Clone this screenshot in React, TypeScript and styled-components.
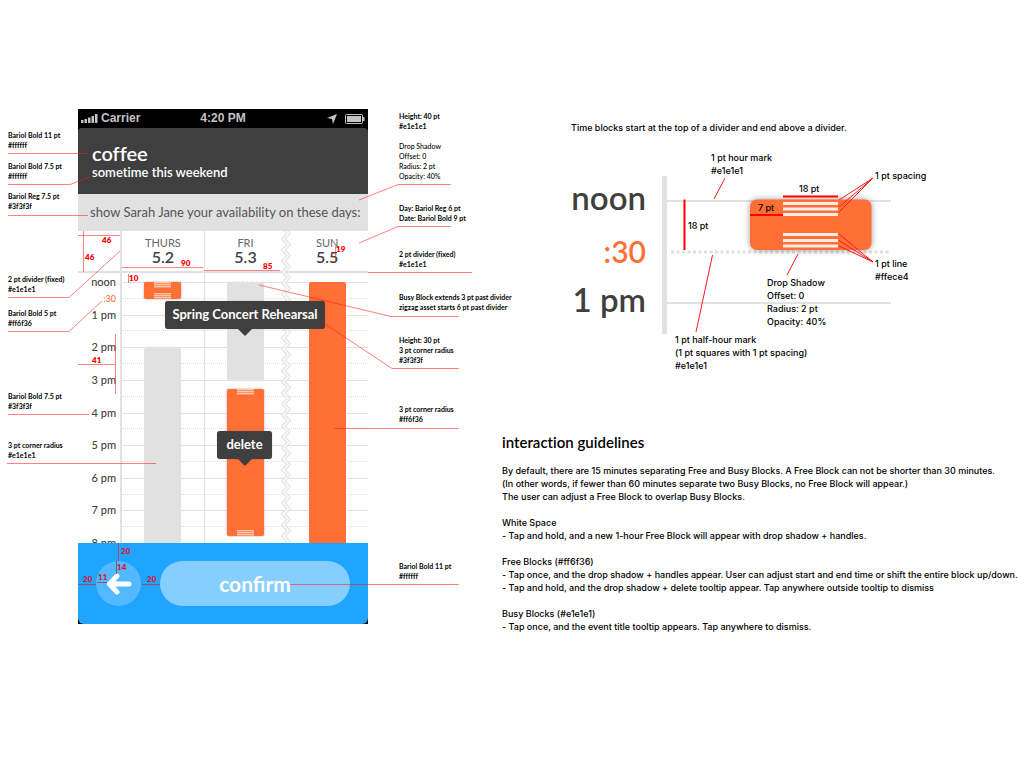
import React from "react";
import styled, { createGlobalStyle, css } from "styled-components";

const ink = "#3f3f3f";
const line = "#e1e1e1";
const free = "#ff6f36";
const red = "#ff1a1a";

const GlobalStyle = createGlobalStyle`
  *, *::before, *::after { box-sizing: border-box; }
  body {
    margin: 0;
    background: #fff;
    color: #111;
    font-family: Lato, "Open Sans", sans-serif;
    font-variant-ligatures: none;
  }
  h1, h2, h3, p, ul, figure { margin: 0; padding: 0; }
  ul { list-style: none; }
`;

const Sheet = styled.main`
  display: flex;
  align-items: flex-start;
  padding-top: 109px;
`;

/* ---------- annotated phone ---------- */

const Board = styled.section`
  position: relative;
  display: flex;
  flex: none;
`;

const Notes = styled.div<{ $side: "left" | "right" }>`
  flex: none;
  width: ${(p) => (p.$side === "left" ? 78 : 134)}px;
  padding-left: ${(p) => (p.$side === "left" ? 8 : 31)}px;
`;

const Note = styled.p<{ $gap: number; $regular?: boolean }>`
  margin-top: ${(p) => p.$gap}px;
  font-size: 7px;
  line-height: 10px;
  font-weight: ${(p) => (p.$regular ? 500 : 700)};
  color: #000;
  white-space: pre;
`;

const Phone = styled.article`
  flex: none;
  width: 290px;
  background: #000;
`;

const StatusBar = styled.div`
  display: grid;
  grid-template-columns: 1fr auto 1fr;
  align-items: center;
  height: 19px;
  padding: 0 3px;
  font: 700 12px/19px "Liberation Sans", Arial, sans-serif;
  color: #c4c4c4;
`;

const StatusGroup = styled.span<{ $end?: boolean }>`
  display: flex;
  align-items: center;
  gap: ${(p) => (p.$end ? 8 : 3)}px;
  justify-content: ${(p) => (p.$end ? "flex-end" : "flex-start")};
`;

const EventHeader = styled.header`
  height: 66px;
  padding: 14px 14px 0;
  border-radius: 4px 4px 0 0;
  background: ${ink};
  color: #fff;
`;

const EventTitle = styled.h1`
  font-size: 20px;
  line-height: 22px;
  font-weight: 600;
`;

const EventWhen = styled.p`
  font-size: 13px;
  line-height: 16px;
  font-weight: 600;
`;

const Prompt = styled.p`
  height: 37px;
  padding-left: 12px;
  background: ${line};
  color: #555;
  font-size: 13px;
  line-height: 36px;
  white-space: nowrap;
`;

const Schedule = styled.div`
  position: relative;
  display: grid;
  height: 312px;
  background: #fff;
`;

const Ruling = styled.div`
  grid-area: 1 / 1;
  display: flex;
  flex-direction: column;
  height: 312px;
`;

const RulingHead = styled.div`
  height: 51px;
  padding-top: 40px;
`;

const Divider = styled.div`
  height: 2px;
  background: ${line};
`;

const RulingHours = styled.div`
  flex: 1;
  display: grid;
  grid-template-rows: repeat(8, 1fr);
  margin-left: 44px;
`;

const RulingHour = styled.div`
  border-top: 1px solid ${line};
  &::after {
    content: "";
    display: block;
    height: 50%;
    border-bottom: 1px dotted #dcdcdc;
  }
`;

const Columns = styled.div`
  grid-area: 1 / 1;
  display: flex;
  height: 312px;
  overflow: hidden;
`;

const Hours = styled.div`
  flex: none;
  width: 44px;
  padding: 45px 4px 0 0;
  border-right: 2px solid ${line};
`;

const HourList = styled.ul`
  display: grid;
  grid-template-rows: repeat(8, 1fr) 12px;
  height: 273px;
  text-align: right;
  color: ${ink};
  font-size: 11px;
  line-height: 12px;
  font-weight: 500;
`;

const HalfHour = styled.span`
  display: block;
  margin-top: 5px;
  color: ${free};
  font-size: 9px;
`;

const Day = styled.section<{ $ruled?: boolean }>`
  flex: 1;
  display: flex;
  flex-direction: column;
  align-items: center;
  border-right: ${(p) => (p.$ruled ? `1px solid ${line}` : "0")};
`;

const DayHead = styled.h2`
  height: 50px;
  padding-top: 5px;
  text-align: center;
  color: ${ink};
  font-size: 16px;
  line-height: 16px;
  font-weight: 600;
`;

const DayName = styled.span`
  display: block;
  color: #666;
  font-size: 11px;
  line-height: 13px;
  font-weight: 400;
`;

const Block = styled.div<{ $kind: "free" | "busy"; $height: number; $gap?: number; $lifted?: boolean; $torn?: boolean; $open?: boolean }>`
  flex: none;
  display: flex;
  flex-direction: column;
  justify-content: space-between;
  align-items: center;
  width: 37px;
  height: ${(p) => p.$height}px;
  margin-top: ${(p) => p.$gap ?? 0}px;
  border-radius: ${(p) => (p.$open ? "2px 2px 0 0" : p.$torn ? "0 0 2px 2px" : "2px")};
  background: ${(p) => (p.$kind === "free" ? free : line)};
  ${(p) => p.$lifted && css`box-shadow: 0 0 2px rgba(0, 0, 0, 0.4);`}
  ${(p) =>
    p.$torn &&
    css`
      clip-path: polygon(0 2px, 6% 0, 12% 2px, 18% 0, 25% 2px, 31% 0, 37% 2px, 43% 0, 50% 2px, 56% 0, 62% 2px, 68% 0, 75% 2px, 81% 0, 87% 2px, 93% 0, 100% 2px, 100% 100%, 0 100%);
    `}
`;

const Grip = styled.span`
  width: 17px;
  height: 6px;
  background: repeating-linear-gradient(#ffc6ac 0 1px, #ff9468 1px 2px);
`;

const TearMark = styled.svg`
  flex: none;
  width: 10px;
  height: 312px;
  margin: 0 -5px;
`;

const Tooltip = styled.div<{ $x: number; $y: number; $width: number }>`
  position: absolute;
  left: ${(p) => p.$x}px;
  top: ${(p) => p.$y}px;
  width: ${(p) => p.$width}px;
  height: 28px;
  border-radius: 3px;
  background: ${ink};
  box-shadow: 0 0 1px rgba(0, 0, 0, 0.4);
  color: #fff;
  font-size: 13px;
  line-height: 26px;
  font-weight: 700;
  text-align: center;
  white-space: nowrap;
  &::after {
    content: "";
    position: absolute;
    left: calc(50% - 7px);
    top: 100%;
    border: 7px solid transparent;
    border-top-color: ${ink};
    border-bottom: 0;
  }
`;

const ActionBar = styled.footer`
  display: flex;
  align-items: center;
  gap: 19px;
  height: 81px;
  padding: 0 18px;
  border-radius: 0 0 6px 6px;
  background: #1fa4ff;
`;

const BackButton = styled.button`
  flex: none;
  display: grid;
  place-items: center;
  width: 45px;
  height: 45px;
  padding: 0;
  border: 0;
  border-radius: 50%;
  background: #52b9ff;
`;

const ConfirmButton = styled.button`
  flex: 1;
  height: 45px;
  padding: 0;
  border: 0;
  border-radius: 23px;
  background: #85ceff;
  color: #fff;
  font: 700 21px/45px Lato, sans-serif;
`;

const Leaders = styled.svg`
  position: absolute;
  left: 0;
  top: 0;
  width: 520px;
  height: 515px;
  pointer-events: none;
  fill: none;
  stroke: ${red};
`;

const Measure = styled.text<{ $onBlue?: boolean }>`
  fill: ${(p) => (p.$onBlue ? "#d01c3c" : "#ff0000")};
  stroke: none;
  font-size: 8px;
  font-weight: 800;
`;

/* ---------- detail and guidelines ---------- */

const Side = styled.section`
  flex: 1;
  min-width: 0;
  padding-top: 12px;
  font-family: Inter, sans-serif;
  font-size: 9px;
  line-height: 13px;
  font-weight: 500;
  color: #000;
  white-space: nowrap;
`;

const Detail = styled.figure`
  position: relative;
  height: 311px;
  margin-left: 69px;
`;

const DetailArt = styled.svg`
  position: absolute;
  left: 0;
  top: 19px;
  width: 340px;
  height: 240px;
`;

const Caption = styled.span<{ $x: number; $y: number }>`
  position: absolute;
  left: ${(p) => p.$x}px;
  top: ${(p) => p.$y}px;
  white-space: pre;
`;

const BigHour = styled.span<{ $y: number; $half?: boolean }>`
  position: absolute;
  left: 0;
  top: ${(p) => p.$y}px;
  width: 75px;
  text-align: right;
  color: ${(p) => (p.$half ? free : ink)};
  font-family: Lato, sans-serif;
  font-size: ${(p) => (p.$half ? 30 : 33)}px;
  line-height: 36px;
  font-weight: 600;
`;

const GuideTitle = styled.h2`
  margin-bottom: 12px;
  font-family: Lato, sans-serif;
  font-size: 15px;
  line-height: 20px;
  font-weight: 600;
`;

const GuideSection = styled.div`
  margin-bottom: 13px;
`;

const GuideHead = styled.h3`
  font: inherit;
`;

const hours = ["noon", "1 pm", "2 pm", "3 pm", "4 pm", "5 pm", "6 pm", "7 pm", "8 pm"];

const leftNotes = [
  { gap: 21, text: "Bariol Bold 11 pt\n#ffffff" },
  { gap: 11, text: "Bariol Bold 7.5 pt\n#ffffff" },
  { gap: 10, text: "Bariol Reg 7.5 pt\n#3f3f3f" },
  { gap: 63, text: "2 pt divider (fixed)\n#e1e1e1" },
  { gap: 14, text: "Bariol Bold 5 pt\n#ff6f36" },
  { gap: 63, text: "Bariol Bold 7.5 pt\n#3f3f3f" },
  { gap: 29, text: "3 pt corner radius\n#e1e1e1" },
];

const rightNotes = [
  { gap: 2, text: "Height: 40 pt\n#e1e1e1" },
  { gap: 10, text: "Drop Shadow\nOffset: 0\nRadius: 2 pt\nOpacity: 40%", regular: true },
  { gap: 22, text: "Day: Bariol Reg 6 pt\nDate: Bariol Bold 9 pt" },
  { gap: 26, text: "2 pt divider (fixed)\n#e1e1e1" },
  { gap: 23, text: "Busy Block extends 3 pt past divider\nzigzag asset starts 6 pt past divider" },
  { gap: 23, text: "Height: 30 pt\n3 pt corner radius\n#3f3f3f" },
  { gap: 39, text: "3 pt corner radius\n#ff6f36" },
  { gap: 137, text: "Bariol Bold 11 pt\n#ffffff" },
];

const guides = [
  {
    title: "White Space",
    rules: ["Tap and hold, and a new 1-hour Free Block will appear with drop shadow + handles."],
  },
  {
    title: "Free Blocks (#ff6f36)",
    rules: [
      "Tap once, and the drop shadow + handles appear. User can adjust start and end time or shift the entire block up/down.",
      "Tap and hold, and the drop shadow + delete tooltip appear. Tap anywhere outside tooltip to dismiss",
    ],
  },
  {
    title: "Busy Blocks (#e1e1e1)",
    rules: ["Tap once, and the event title tooltip appears. Tap anywhere to dismiss."],
  },
];

const zigzag = (x: number, up = false) => {
  const pts = Array.from({ length: 59 }, (_, i) => `${x + (i % 2 ? 5 : 0)},${i * 5.5 - 3}`);
  return (up ? pts.reverse() : pts).join(" ");
};

function Tear() {
  return (
    <TearMark viewBox="0 0 10 312" aria-hidden="true">
      <polygon points={`${zigzag(0)} ${zigzag(5, true)}`} fill="#f8f8f8" />
      <polyline points={zigzag(0.5)} fill="none" stroke="#d9d9d9" />
      <polyline points={zigzag(4.5)} fill="none" stroke="#d9d9d9" />
    </TearMark>
  );
}

function LeaderLines() {
  return (
    <Leaders viewBox="0 109 520 515" aria-hidden="true">
      <g strokeOpacity="0.55">
        <path d="M8 153.5H88M8 184.5H70L90 177M8 215.5H88M8 297.5H69L120 251M8 331.5H69L102 301M8 414.5H89M7 463.5H156" />
        <path d="M359 200L398 184.5H451M359 243L398 226.5H451M368 272.5H472M259 285L391 316.5H459M322 322L392 368.5H459M334 428.5H459M290 584.5H459" />
        <path d="M78 235.5H120M83.5 231V272M122 267.5H203M204 270.5H280M128.5 274V283M115.5 334V394M78 364.5H115M335.5 246V263" />
      </g>
      <path
        d="M118.5 543V561M116.5 561V574M78 584.5H96M97 582.5H107M142 584.5H160"
        stroke="#a04a78"
      />
      <Measure x="102" y="243">46</Measure>
      <Measure x="85" y="260">46</Measure>
      <Measure x="181" y="266">90</Measure>
      <Measure x="263" y="269">85</Measure>
      <Measure x="129" y="281">10</Measure>
      <Measure x="92" y="363">41</Measure>
      <Measure x="336" y="252">19</Measure>
      <Measure x="121" y="554" $onBlue>20</Measure>
      <Measure x="117" y="570" $onBlue>14</Measure>
      <Measure x="83" y="582" $onBlue>20</Measure>
      <Measure x="98" y="580" $onBlue>11</Measure>
      <Measure x="147" y="582" $onBlue>20</Measure>
    </Leaders>
  );
}

function PhoneScreen() {
  return (
    <Phone>
      <StatusBar>
        <StatusGroup>
          <svg width="17" height="9" viewBox="0 0 17 9" fill="#c4c4c4" aria-hidden="true">
            <path d="M0 6h2.5v3H0zM3.5 5H6v4H3.5zM7 3.5h2.5V9H7zM10.500 2H13v7h-2.500zM14 0h2.500v9H14z" />
          </svg>
          Carrier
        </StatusGroup>
        4:20 PM
        <StatusGroup $end>
          <svg width="10" height="10" viewBox="0 0 10 10" fill="#c4c4c4" aria-hidden="true">
            <path d="M10 0L6 10 5 5 0 4z" />
          </svg>
          <svg width="20" height="10" viewBox="0 0 20 10" aria-hidden="true">
            <rect x="0.500" y="0.500" width="17" height="9" rx="1" fill="none" stroke="#c4c4c4" />
            <rect x="2" y="2" width="14" height="6" fill="#c4c4c4" />
            <rect x="18" y="3" width="1.500" height="4" fill="#c4c4c4" />
          </svg>
        </StatusGroup>
      </StatusBar>
      <EventHeader>
        <EventTitle>coffee</EventTitle>
        <EventWhen>sometime this weekend</EventWhen>
      </EventHeader>
      <Prompt>show Sarah Jane your availability on these days:</Prompt>
      <Schedule>
        <Ruling>
          <RulingHead>
            <Divider />
          </RulingHead>
          <RulingHours>
            {hours.slice(0, 8).map((h) => (
              <RulingHour key={h} />
            ))}
          </RulingHours>
        </Ruling>
        <Columns>
          <Hours>
            <HourList>
              {hours.map((h) => (
                <li key={h}>
                  {h}
                  {h === "noon" && <HalfHour>:30</HalfHour>}
                </li>
              ))}
            </HourList>
          </Hours>
          <Day $ruled>
            <DayHead>
              <DayName>THURS</DayName>5.2
            </DayHead>
            <Block $kind="free" $height={17} $gap={1} $lifted>
              <Grip />
              <Grip />
            </Block>
            <Block $kind="busy" $height={195} $gap={49} $open />
          </Day>
          <Day>
            <DayHead>
              <DayName>FRI</DayName>5.3
            </DayHead>
            <Block $kind="busy" $height={100} $torn />
            <Block $kind="free" $height={147} $gap={8} $lifted>
              <Grip />
              <Grip />
            </Block>
          </Day>
          <Tear />
          <Day>
            <DayHead>
              <DayName>SUN</DayName>5.5
            </DayHead>
            <Block $kind="free" $height={261} $gap={1} $open />
          </Day>
        </Columns>
        <Tooltip $x={87} $y={70} $width={160}>
          Spring Concert Rehearsal
        </Tooltip>
        <Tooltip $x={139} $y={200} $width={55}>
          delete
        </Tooltip>
      </Schedule>
      <ActionBar>
        <BackButton aria-label="Back">
          <svg width="26" height="22" viewBox="0 0 26 22" fill="none" stroke="#fff" strokeWidth="5" strokeLinecap="round" strokeLinejoin="round" aria-hidden="true">
            <path d="M11 3L3.500 11 11 19M4 11H23" />
          </svg>
        </BackButton>
        <ConfirmButton>confirm</ConfirmButton>
      </ActionBar>
    </Phone>
  );
}

function BlockDetail() {
  return (
    <Detail>
      <figcaption>Time blocks start at the top of a divider and end above a divider.</figcaption>
      <DetailArt viewBox="571 140 340 240" aria-hidden="true">
        <path d="M667 201H891M667 303H891" stroke={line} strokeWidth="2" />
        <path d="M671 252H891" stroke={line} strokeWidth="3" strokeDasharray="3 2.500" />
        <path d="M664.500 176V334" stroke={line} strokeWidth="5" />
        <rect
          x="750"
          y="199.500"
          width="121.500"
          height="50.500"
          rx="7"
          fill={free}
          style={{ filter: "drop-shadow(0 0 3px rgba(0,0,0,.4))" }}
        />
        <path
          d="M783 203.500H838M783 209H838M783 214.500H838M783 234.500H838M783 240.500H838M783 246H838"
          stroke="#ffece4"
          strokeWidth="3"
        />
        <path d="M684.500 199.500V250M783 196.500H838M750 215H783" stroke="#f00" strokeWidth="2" />
        <path
          d="M873 178L839 200M873 178L839 207M873 178L839 212M873 262L839 234M873 262L839 240.500M873 262L839 246M725 178L714 199M712.500 255L696 332M798 254L787 275"
          stroke={red}
        />
      </DetailArt>
      <BigHour $y={58}>noon</BigHour>
      <BigHour $y={112} $half>
        :30
      </BigHour>
      <BigHour $y={160}>1 pm</BigHour>
      <Caption $x={140} $y={30}>{"1 pt hour mark\n#e1e1e1"}</Caption>
      <Caption $x={117} $y={98}>18 pt</Caption>
      <Caption $x={228} $y={61}>18 pt</Caption>
      <Caption $x={187} $y={80}>7 pt</Caption>
      <Caption $x={304} $y={48}>1 pt spacing</Caption>
      <Caption $x={304} $y={136}>{"1 pt line\n#ffece4"}</Caption>
      <Caption $x={196} $y={155}>{"Drop Shadow\nOffset: 0\nRadius: 2 pt\nOpacity: 40%"}</Caption>
      <Caption $x={104} $y={212}>{"1 pt half-hour mark\n(1 pt squares with 1 pt spacing)\n#e1e1e1"}</Caption>
    </Detail>
  );
}

function Guidelines() {
  return (
    <>
      <GuideTitle>interaction guidelines</GuideTitle>
      <GuideSection>
        <p>By default, there are 15 minutes separating Free and Busy Blocks. A Free Block can not be shorter than 30 minutes.</p>
        <p>(In other words, if fewer than 60 minutes separate two Busy Blocks, no Free Block will appear.)</p>
        <p>The user can adjust a Free Block to overlap Busy Blocks.</p>
      </GuideSection>
      {guides.map((g) => (
        <GuideSection key={g.title}>
          <GuideHead>{g.title}</GuideHead>
          <ul>
            {g.rules.map((r) => (
              <li key={r}>- {r}</li>
            ))}
          </ul>
        </GuideSection>
      ))}
    </>
  );
}

export default function App() {
  return (
    <>
      <GlobalStyle />
      <Sheet>
        <Board>
          <Notes $side="left">
            {leftNotes.map((n, i) => (
              <Note key={i} $gap={n.gap}>
                {n.text}
              </Note>
            ))}
          </Notes>
          <PhoneScreen />
          <Notes $side="right">
            {rightNotes.map((n, i) => (
              <Note key={i} $gap={n.gap} $regular={n.regular}>
                {n.text}
              </Note>
            ))}
          </Notes>
          <LeaderLines />
        </Board>
        <Side>
          <BlockDetail />
          <Guidelines />
        </Side>
      </Sheet>
    </>
  );
}
